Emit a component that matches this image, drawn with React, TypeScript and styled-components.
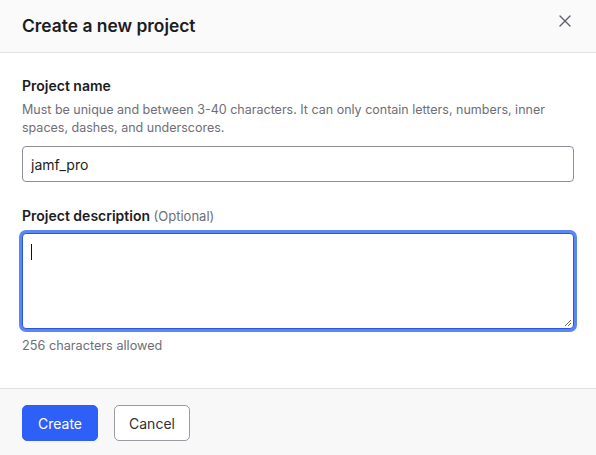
import React from "react";
import styled, { createGlobalStyle } from "styled-components";

const Global = createGlobalStyle`
  html, body { margin: 0; padding: 0; background: #ffffff; }
  body { font-family: Inter, "Noto Sans", sans-serif; -webkit-font-smoothing: antialiased; }
  * { box-sizing: border-box; }
`;

const Dialog = styled.div`
  width: 596px;
  height: 455px;
  display: flex;
  flex-direction: column;
  background: #ffffff;
`;

const Header = styled.header`
  height: 53px;
  flex: none;
  display: flex;
  align-items: center;
  justify-content: space-between;
  padding: 0 22px 1px 22px;
  background: #fafafa;
  border-bottom: 1px solid #e2e2e4;
`;

const Title = styled.h1`
  margin: 0;
  font-size: 17.4px;
  line-height: 24px;
  font-weight: 600;
  color: #1c1c1e;
`;

const CloseButton = styled.button`
  border: none;
  background: none;
  padding: 0;
  width: 14px;
  height: 14px;
  display: flex;
  align-items: center;
  justify-content: center;
  margin-right: 2px;
  margin-bottom: 9px;
  cursor: pointer;
  color: #5f6070;
`;

const Body = styled.main`
  flex: 1;
  padding: 23px 22px 0 22px;
  display: flex;
  flex-direction: column;
`;

const Field = styled.div<{ $gap?: number }>`
  display: flex;
  flex-direction: column;
  margin-top: ${(p) => p.$gap ?? 0}px;
`;

const Label = styled.label`
  font-size: 14px;
  line-height: 20px;
  font-weight: 600;
  color: #1c1c1e;
`;

const Optional = styled.span`
  font-weight: 400;
  font-size: 13px;
  color: #6e6e78;
`;

const Help = styled.p`
  margin: 5px 0 0 0;
  font-size: 12.5px;
  line-height: 18px;
  color: #6e6e78;
`;

const Input = styled.input`
  margin-top: 9px;
  height: 36px;
  width: 100%;
  border: 1px solid #8e8e9a;
  border-radius: 4px;
  padding: 0 8px;
  font-family: inherit;
  font-size: 14px;
  color: #1c1c1e;
  background: #ffffff;
  outline: none;
`;

const TextArea = styled.div`
  margin-top: 7px;
  height: 96px;
  width: 100%;
  border: 1px solid #2b57e0;
  border-radius: 4px;
  box-shadow: 0 0 0 3px #5b87f2;
  background: #ffffff;
  position: relative;
  padding: 10px 8px;
`;

const Caret = styled.span`
  display: block;
  width: 1px;
  height: 16px;
  background: #111111;
`;

const Grip = styled.svg`
  position: absolute;
  right: 1px;
  bottom: 1px;
`;

const Counter = styled.p`
  margin: 9px 0 0 0;
  font-size: 12.7px;
  line-height: 16px;
  color: #6e6e78;
`;

const Footer = styled.footer`
  height: 67px;
  flex: none;
  display: flex;
  align-items: flex-start;
  gap: 16px;
  padding: 16px 22px 0 22px;
  background: #f8f8f8;
  border-top: 1px solid #e2e2e4;
`;

const Button = styled.button<{ $primary?: boolean }>`
  height: 36px;
  padding: 0 ${(p) => (p.$primary ? 15 : 14)}px;
  border-radius: 5px;
  font-family: inherit;
  font-size: 14px;
  font-weight: 400;
  cursor: pointer;
  border: 1px solid ${(p) => (p.$primary ? "#2e5ff7" : "#9a9aa2")};
  background: ${(p) => (p.$primary ? "#2e5ff7" : "#ffffff")};
  color: ${(p) => (p.$primary ? "#ffffff" : "#2f2f36")};
`;

export default function App() {
  return (
    <>
      <Global />
      <Dialog>
        <Header>
          <Title>Create a new project</Title>
          <CloseButton aria-label="Close">
            <svg width="12" height="12" viewBox="0 0 12 12">
              <path d="M1 1L11 11M11 1L1 11" stroke="currentColor" strokeWidth="1.4" strokeLinecap="round" />
            </svg>
          </CloseButton>
        </Header>
        <Body>
          <Field>
            <Label>Project name</Label>
            <Help>
              Must be unique and between 3-40 characters. It can only contain letters, numbers, inner
              spaces, dashes, and underscores.
            </Help>
            <Input defaultValue="jamf_pro" />
          </Field>
          <Field $gap={24}>
            <Label>
              Project description <Optional>(Optional)</Optional>
            </Label>
            <TextArea>
              <Caret />
              <Grip width="9" height="9" viewBox="0 0 9 9">
                <path d="M8 2L2 8M8 5L5 8" stroke="#6b6b6b" strokeWidth="1" />
              </Grip>
            </TextArea>
            <Counter>256 characters allowed</Counter>
          </Field>
        </Body>
        <Footer>
          <Button $primary>Create</Button>
          <Button>Cancel</Button>
        </Footer>
      </Dialog>
    </>
  );
}
